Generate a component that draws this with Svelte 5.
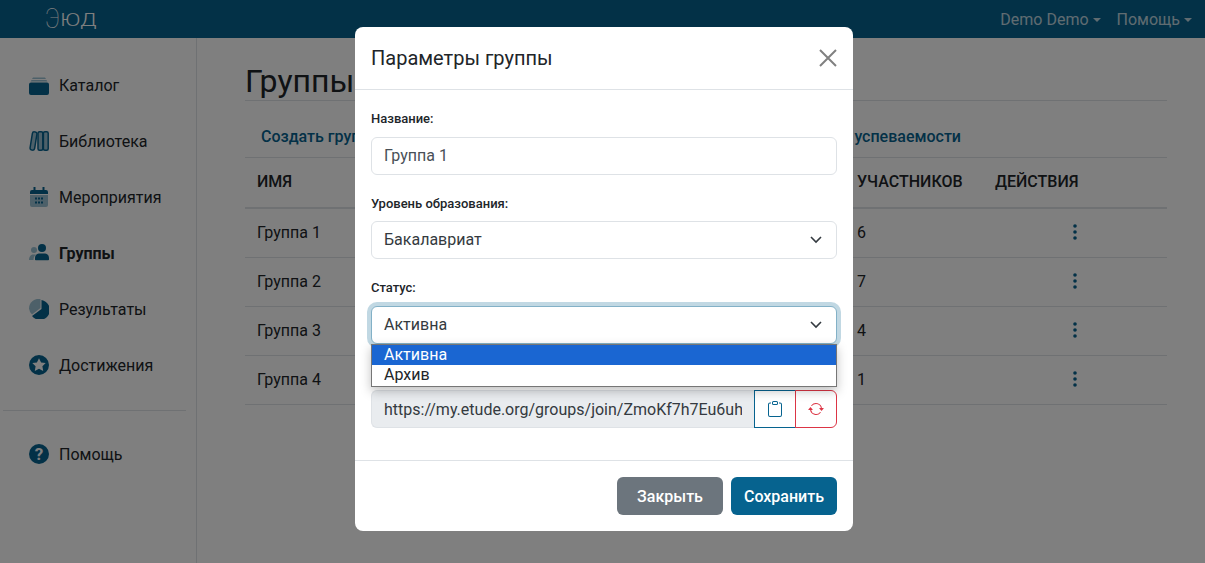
<script>
	const navItems = [
		{ id: 'catalog', label: 'Каталог' },
		{ id: 'library', label: 'Библиотека' },
		{ id: 'events', label: 'Мероприятия' },
		{ id: 'groups', label: 'Группы', active: true },
		{ id: 'results', label: 'Результаты' },
		{ id: 'awards', label: 'Достижения' }
	];

	const groups = [
		{ name: 'Группа 1', members: 6 },
		{ name: 'Группа 2', members: 7 },
		{ name: 'Группа 3', members: 4 },
		{ name: 'Группа 4', members: 1 }
	];
</script>

{#snippet navIcon(id)}
	<svg class="nav-icon" viewBox="0 0 20 20" aria-hidden="true">
		{#if id === 'catalog'}
			<path class="soft" d="M4 2.500h12l1 1.600H3zM2.500 5h15l.8 1.600H1.700z" />
			<path d="M2 7.500h16a2 2 0 0 1 2 2V18a2 2 0 0 1-2 2H2a2 2 0 0 1-2-2V9.500a2 2 0 0 1 2-2z" />
		{:else if id === 'library'}
			<g class="outlined">
				<rect x="2.200" y="0.800" width="4.600" height="18.400" rx="2" transform="rotate(9 4.500 10)" />
				<rect x="9" y="0.800" width="4.800" height="18.400" rx="1.500" />
				<rect x="14.400" y="0.800" width="4.800" height="18.400" rx="1.500" />
			</g>
		{:else if id === 'events'}
			<path class="soft" d="M1 8h18v10a2 2 0 0 1-2 2H3a2 2 0 0 1-2-2z" />
			<path d="M4.500 0h2v3h7V0h2v3H17a2 2 0 0 1 2 2v2H1V5a2 2 0 0 1 2-2h1.500z" />
			<path d="M6 10.500h2v2H6zM9 10.500h2v2H9zM12 10.500h2v2h-2zM6 14.500h2v2H6zM9 14.500h2v2H9zM12 14.500h2v2h-2z" />
		{:else if id === 'groups'}
			<circle class="soft" cx="5" cy="7" r="3" />
			<path class="soft" d="M0 17c0-3 1.500-5.500 4-5.500h3c-1.500 1-2.500 3-2.500 5.500z" />
			<circle cx="13" cy="5" r="4" />
			<path d="M10 10.500h6c2.300 0 4 2 4 4.500v1.500a.8.8 0 0 1-.8.8H6.800a.8.8 0 0 1-.8-.8V15c0-2.500 1.700-4.500 4-4.500z" />
		{:else if id === 'results'}
			<path class="soft" d="M11.500 0v9L3 15.500A9.800 9.800 0 0 1 0 9.500 9.800 9.800 0 0 1 11.500 0z" />
			<path d="M12.500 1A10 10 0 1 1 3 17l9.500-7z" />
		{:else if id === 'awards'}
			<path fill-rule="evenodd" d="M10 0a10 10 0 1 1 0 20 10 10 0 0 1 0-20zm0 3.200-2.100 4.200-4.600.7 3.300 3.200-.8 4.600 4.200-2.200 4.200 2.200-.8-4.600 3.300-3.200-4.600-.7z" />
		{/if}
	</svg>
{/snippet}

<div class="page">
	<header class="topbar">
		<a class="logo" href="#top"><span class="logo-e">Э</span><span class="logo-rest">ЮД</span></a>
		<nav class="topnav">
			<span class="drop">Demo Demo</span>
			<span class="drop">Помощь</span>
		</nav>
	</header>

	<div class="layout">
		<aside class="sidebar">
			<ul class="menu">
				{#each navItems as item}
					<li class:active={item.active}>
						{@render navIcon(item.id)}
						{item.label}
					</li>
				{/each}
			</ul>
			<hr />
			<div class="help">
				<svg class="nav-icon" viewBox="0 0 20 20" aria-hidden="true">
					<circle cx="10" cy="10" r="10" />
					<text x="10" y="16" text-anchor="middle" class="help-mark">?</text>
				</svg>
				Помощь
			</div>
		</aside>

		<main class="content">
			<h1>Группы</h1>
			<div class="links">
				<span class="create">Создать группу</span>
				<span class="report">Отчёт об успеваемости</span>
			</div>
			<div class="table">
				<div class="row head">
					<div>ИМЯ</div>
					<div>УЧАСТНИКОВ</div>
					<div class="actions-head">ДЕЙСТВИЯ</div>
				</div>
				{#each groups as group}
					<div class="row">
						<div>{group.name}</div>
						<div>{group.members}</div>
						<div class="dots">
							<svg width="4" height="16" viewBox="0 0 4 16" aria-hidden="true">
								<circle cx="2" cy="2" r="1.800" />
								<circle cx="2" cy="8" r="1.800" />
								<circle cx="2" cy="14" r="1.800" />
							</svg>
						</div>
					</div>
				{/each}
			</div>
		</main>
	</div>

	<div class="backdrop"></div>

	<div class="modal" role="dialog" aria-modal="true">
		<div class="modal-header">
			<h2>Параметры группы</h2>
			<svg class="close" width="18" height="18" viewBox="0 0 18 18" aria-label="Закрыть">
				<path d="M1 1l16 16M17 1L1 17" />
			</svg>
		</div>

		<div class="modal-body">
			<div class="field">
				<label for="group-name">Название:</label>
				<input id="group-name" class="control name" value="Группа 1" />
			</div>

			<div class="field">
				<div class="label">Уровень образования:</div>
				<div class="control select">
					Бакалавриат
					<svg class="chevron" width="16" height="12" viewBox="0 0 16 12" aria-hidden="true">
						<path d="M3 3l5 5 5-5" />
					</svg>
				</div>
			</div>

			<div class="field status">
				<div class="label">Статус:</div>
				<div class="control select focused">
					Активна
					<svg class="chevron" width="16" height="12" viewBox="0 0 16 12" aria-hidden="true">
						<path d="M3 3l5 5 5-5" />
					</svg>
				</div>
				<ul class="options">
					<li class="selected">Активна</li>
					<li>Архив</li>
				</ul>
			</div>

			<div class="field link-field">
				<div class="input-group">
					<input class="control link" value="https://my.etude.org/groups/join/ZmoKf7h7Eu6uh" disabled />
					<button class="icon-btn copy" aria-label="Копировать">
						<svg width="16" height="16" viewBox="0 0 16 16" fill="currentColor" aria-hidden="true">
							<path d="M4 1.500H3a2 2 0 0 0-2 2V14a2 2 0 0 0 2 2h10a2 2 0 0 0 2-2V3.500a2 2 0 0 0-2-2h-1v1h1a1 1 0 0 1 1 1V14a1 1 0 0 1-1 1H3a1 1 0 0 1-1-1V3.500a1 1 0 0 1 1-1h1v-1z" />
							<path d="M9.500 1a.5.5 0 0 1 .5.5v1a.5.5 0 0 1-.5.5h-3a.5.5 0 0 1-.5-.5v-1a.5.5 0 0 1 .5-.5h3zm-3-1A1.500 1.500 0 0 0 5 1.500v1A1.500 1.500 0 0 0 6.500 4h3A1.500 1.500 0 0 0 11 2.500v-1A1.500 1.500 0 0 0 9.500 0h-3z" />
						</svg>
					</button>
					<button class="icon-btn renew" aria-label="Обновить">
						<svg width="16" height="16" viewBox="0 0 16 16" fill="currentColor" aria-hidden="true">
							<path d="M11.534 7h3.932a.25.25 0 0 1 .192.41l-1.966 2.360a.25.25 0 0 1-.384 0l-1.966-2.360a.25.25 0 0 1 .192-.41zm-11 2h3.932a.25.25 0 0 0 .192-.41L2.692 6.230a.25.25 0 0 0-.384 0L.342 8.590A.25.25 0 0 0 .534 9z" />
							<path d="M8 3c-1.552 0-2.940.707-3.857 1.818a.5.5 0 1 1-.771-.636A6.002 6.002 0 0 1 13.917 7H12.900A5.002 5.002 0 0 0 8 3zM3.100 9a5.002 5.002 0 0 0 8.757 2.182.5.5 0 1 1 .771.636A6.002 6.002 0 0 1 2.083 9H3.100z" />
						</svg>
					</button>
				</div>
			</div>
		</div>

		<div class="modal-footer">
			<button class="btn secondary">Закрыть</button>
			<button class="btn primary">Сохранить</button>
		</div>
	</div>
</div>

<style>
	:global(body) {
		margin: 0;
		font-family: Roboto, 'Liberation Sans', sans-serif;
		font-size: 16px;
		color: #212529;
		background: #fff;
	}

	.page {
		position: relative;
		height: 563px;
		overflow: hidden;
	}

	.topbar {
		height: 38px;
		background: #06638f;
		display: flex;
		align-items: center;
		justify-content: space-between;
		padding: 0 13px 0 45px;
	}

	.logo {
		display: flex;
		align-items: center;
		color: #fff;
		text-decoration: none;
		font-weight: 300;
	}

	.logo-e {
		display: inline-block;
		font-size: 28px;
		font-weight: 100;
		line-height: 38px;
		letter-spacing: -3px;
		transform: scaleX(0.820);
		transform-origin: left center;
	}

	.logo-rest {
		display: inline-block;
		font-size: 18px;
		line-height: 38px;
		margin-top: 2px;
		transform: scaleX(1.250);
		transform-origin: left center;
	}

	.topnav {
		display: flex;
		gap: 16px;
		color: rgba(255, 255, 255, 0.75);
	}

	.drop::after {
		content: '';
		display: inline-block;
		margin-left: 4px;
		vertical-align: 3px;
		border-top: 4.800px solid;
		border-left: 4.800px solid transparent;
		border-right: 4.800px solid transparent;
	}

	.layout {
		display: flex;
		height: 525px;
	}

	.sidebar {
		box-sizing: border-box;
		border-right: 1px solid #dee2e6;
		flex: none;
		width: 197px;
		padding: 19px 10px 0 3px;
	}

	.menu {
		list-style: none;
		margin: 0;
		padding: 0;
	}

	.menu li,
	.help {
		display: flex;
		align-items: center;
		height: 56px;
		padding-left: 26px;
		gap: 10px;
		color: #212529;
	}

	.menu li.active {
		font-weight: 700;
	}

	.nav-icon {
		width: 20px;
		height: 20px;
		flex: none;
		fill: #06638f;
	}

	.soft {
		opacity: 0.4;
	}

	.outlined rect {
		fill: rgba(6, 99, 143, 0.4);
		stroke: #06638f;
		stroke-width: 1.500;
	}

	.help-mark {
		font-size: 17px;
		font-weight: 700;
		fill: #fff;
	}

	.sidebar hr {
		border: 0;
		border-top: 1px solid #dee2e6;
		margin: 17px 0 15px;
	}

	.content {
		flex: 1;
		padding: 0 38px 0 48px;
		min-width: 0;
	}

	h1 {
		margin: 0;
		height: 63px;
		box-sizing: border-box;
		padding-top: 24px;
		font-size: 32px;
		line-height: 38px;
		font-weight: 400;
		border-bottom: 1px solid #dee2e6;
	}

	.links {
		height: 57px;
		box-sizing: border-box;
		border-bottom: 1px solid #dee2e6;
		display: flex;
		align-items: center;
		justify-content: space-between;
		padding: 15px 206px 0 16px;
		color: #06638f;
		font-weight: 500;
	}

	.row {
		display: grid;
		grid-template-columns: 600px 138px 184px;
		align-items: center;
		height: 49px;
		box-sizing: border-box;
		padding-bottom: 2px;
		border-bottom: 1px solid #dee2e6;
	}

	.row > div {
		padding-left: 12px;
	}

	.row.head {
		height: 51px;
		border-bottom-width: 2px;
		font-weight: 500;
	}

	.dots {
		padding-left: 0 !important;
		display: flex;
		justify-content: center;
		fill: #06638f;
	}

	.backdrop {
		position: absolute;
		inset: 0;
		background: rgba(0, 0, 0, 0.5);
	}

	.modal {
		position: absolute;
		left: 355px;
		top: 27px;
		width: 498px;
		background: #fff;
		border-radius: 8px;
	}

	.modal-header {
		display: flex;
		align-items: center;
		justify-content: space-between;
		box-sizing: border-box;
		height: 63px;
		padding: 0 16px;
		border-bottom: 1px solid #dee2e6;
	}

	h2 {
		margin: 0;
		font-size: 20px;
		font-weight: 400;
		line-height: 1.500;
	}

	.close {
		fill: none;
		stroke: #808080;
		stroke-width: 2;
	}

	.modal-body {
		padding: 19px 16px 13px;
	}

	.field {
		margin-bottom: 19px;
		position: relative;
	}

	.link-field {
		padding-top: 27.500px;
	}

	label,
	.label {
		display: block;
		font-size: 13px;
		font-weight: 500;
		line-height: 19.500px;
		margin-bottom: 8px;
	}

	.control {
		display: block;
		width: 100%;
		height: 38px;
		box-sizing: border-box;
		padding: 0 12px;
		font: inherit;
		color: #343a40;
		background: #fff;
		border: 1px solid #dee2e6;
		border-radius: 6px;
		outline: 0;
		line-height: 36px;
	}

	.name {
		color: #495057;
	}

	.select {
		position: relative;
	}

	.chevron {
		position: absolute;
		right: 12px;
		top: 12px;
		fill: none;
		stroke: #343a40;
		stroke-width: 1.600;
	}

	.focused {
		border-color: #83b1c7;
		box-shadow: 0 0 0 4px rgba(6, 99, 143, 0.25);
	}

	.options {
		position: absolute;
		left: 0;
		right: 0;
		top: 65.500px;
		margin: 0;
		padding: 0;
		list-style: none;
		background: #fff;
		border: 1px solid #767676;
		box-shadow: 0 4px 10px rgba(0, 0, 0, 0.25);
		z-index: 1;
	}

	.options li {
		height: 20.500px;
		line-height: 20px;
		padding-left: 12px;
	}

	.options .selected {
		background: #1a66d2;
		color: #fff;
	}

	.input-group {
		display: flex;
	}

	.link {
		flex: 1;
		min-width: 0;
		background: #e9ecef;
		border-radius: 6px 0 0 6px;
		border-right: 0;
		color: #343a40;
	}

	.icon-btn {
		width: 42px;
		height: 38px;
		flex: none;
		padding: 0;
		display: flex;
		align-items: center;
		justify-content: center;
		background: #fff;
		border: 1px solid;
	}

	.copy {
		color: #06638f;
		border-color: #06638f;
	}

	.renew {
		color: #dc3545;
		border-color: #dc3545;
		border-radius: 0 6px 6px 0;
		margin-left: -1px;
	}

	.modal-footer {
		display: flex;
		justify-content: flex-end;
		gap: 8px;
		padding: 16px;
		border-top: 1px solid #dee2e6;
	}

	.btn {
		width: 106px;
		height: 38px;
		border: 0;
		border-radius: 6px;
		color: #fff;
		font: inherit;
		font-weight: 500;
	}

	.secondary {
		background: #6c757d;
	}

	.primary {
		background: #06638f;
	}
</style>
